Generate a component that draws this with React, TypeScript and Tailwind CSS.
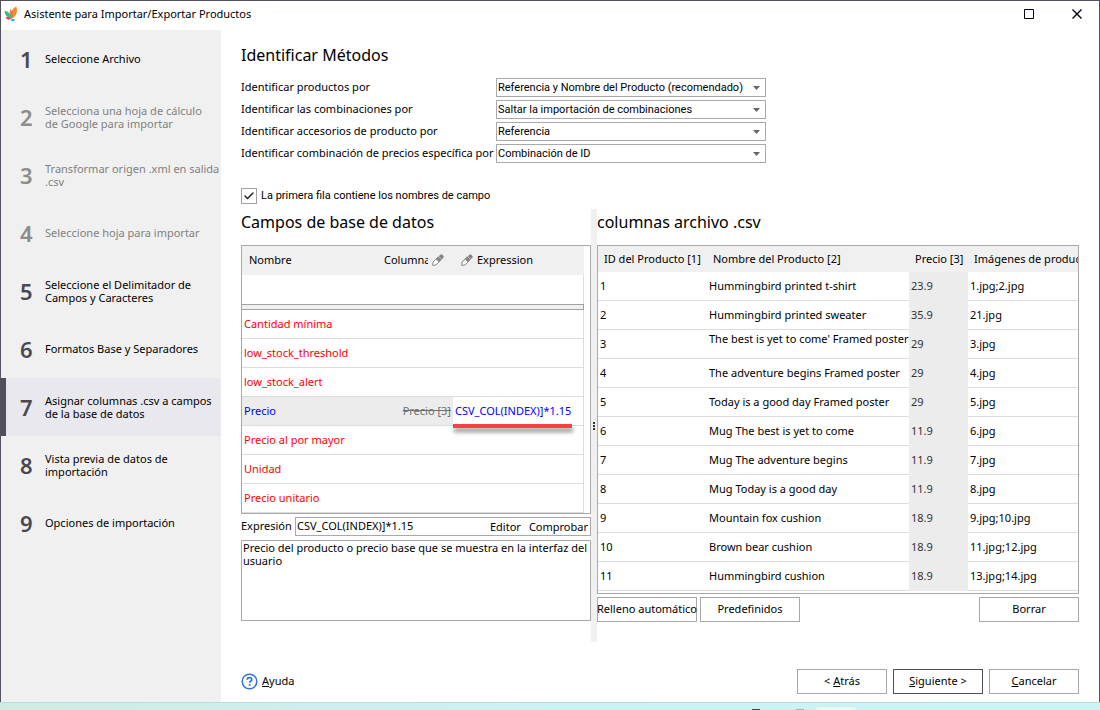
import { Check } from "lucide-react";
import clsx from "clsx";

const steps = [
  { label: "Seleccione Archivo" },
  { label: "Selecciona una hoja de cálculo de\u00a0Google para importar", disabled: true },
  { label: "Transformar origen .xml en salida .csv", disabled: true },
  { label: "Seleccione hoja para importar", disabled: true },
  { label: "Seleccione el Delimitador de Campos y Caracteres" },
  { label: "Formatos Base y Separadores" },
  { label: "Asignar columnas .csv a campos de la base de datos", active: true },
  { label: "Vista previa de datos de importación" },
  { label: "Opciones de importación" },
];

const methods = [
  { id: "products", label: "Identificar productos por", value: "Referencia y Nombre del Producto (recomendado)" },
  { id: "combinations", label: "Identificar las combinaciones por", value: "Saltar la importación de combinaciones" },
  { id: "accessories", label: "Identificar accesorios de producto por", value: "Referencia" },
  { id: "prices", label: "Identificar combinación de precios específica por", value: "Combinación de ID" },
];

const fields = [
  { name: "Cantidad mínima" },
  { name: "low_stock_threshold" },
  { name: "low_stock_alert" },
  { name: "Precio", column: "Precio [3]", expression: "CSV_COL(INDEX)]*1.15" },
  { name: "Precio al por mayor" },
  { name: "Unidad" },
  { name: "Precio unitario" },
];

const products = [
  ["1", "Hummingbird printed t-shirt", "23.9", "1.jpg;2.jpg"],
  ["2", "Hummingbird printed sweater", "35.9", "21.jpg"],
  ["3", "The best is yet to come' Framed poster", "29", "3.jpg"],
  ["4", "The adventure begins Framed poster", "29", "4.jpg"],
  ["5", "Today is a good day Framed poster", "29", "5.jpg"],
  ["6", "Mug The best is yet to come", "11.9", "6.jpg"],
  ["7", "Mug The adventure begins", "11.9", "7.jpg"],
  ["8", "Mug Today is a good day", "11.9", "8.jpg"],
  ["9", "Mountain fox cushion", "18.9", "9.jpg;10.jpg"],
  ["10", "Brown bear cushion", "18.9", "11.jpg;12.jpg"],
  ["11", "Hummingbird cushion", "18.9", "13.jpg;14.jpg"],
];

// selects and the checkbox use the narrower system face
const systemFont = "font-['Roboto','Liberation_Sans',sans-serif]";

function Logo() {
  return (
    <svg className="h-4 w-4 shrink-0" viewBox="0 0 16 16" aria-hidden="true">
      <path d="M12.300.5c1.700 5 .2 9.500-4.300 12C5.300 8 7.300 3 12.300.5Z" fill="#f28a3c" />
      <path d="M6.500 3c2.300 3 3 6.500 1.500 9.500C5.500 10.500 4.700 6.500 6.500 3Z" fill="#e8702f" opacity=".85" />
      <path d="M.5 4.800c4 .7 6.300 3.200 6.800 7.200C3.500 12.500 1 9.500.5 4.800Z" fill="#2fc08f" />
      <path d="M1.500 11.500c2-1 4.500-.5 6 1-2 1.800-4.700 1.500-6-1Z" fill="#ef4056" />
      <path d="M6.500 14c1.500-1.700 3.300-1.700 4.500-.5-.5 2.300-3 2.700-4.500.5Z" fill="#35b6ea" />
    </svg>
  );
}

function Pencil() {
  return (
    <svg className="h-3 w-3 shrink-0" viewBox="0 0 12 12" aria-hidden="true">
      <path d="M8.300.8Q9.300-.2 10.300.8l1 1q.9 1 0 1.900L9.800 5.200 6.800 2.200Z" fill="#858585" />
      <path d="M6.300 2.800 9.200 5.700 4 10.900.7 11.400 1.100 8Z" fill="#fff" stroke="#858585" />
      <path d="m6.300 2.800 2.900 2.900-2.400 2.400-2.900-2.900Z" fill="#858585" />
    </svg>
  );
}

function TitleBar() {
  return (
    <header className="flex h-[29px] items-center gap-1 pb-[3px] pl-[3px]">
      <Logo />
      <h1 className="flex-1">Asistente para Importar/Exportar Productos</h1>
      <button aria-label="Maximizar" className="flex h-7 w-11 items-center justify-center">
        <svg width="10" height="10" viewBox="0 0 10 10">
          <path d="M.5.5h9v9h-9Z" fill="none" stroke="#000" />
        </svg>
      </button>
      <button aria-label="Cerrar" className="flex h-7 w-11 items-center justify-center">
        <svg width="10" height="10" viewBox="0 0 10 10">
          <path d="m.5.5 9 9m0-9-9 9" fill="none" stroke="#000" strokeWidth="1.400" />
        </svg>
      </button>
    </header>
  );
}

function Sidebar() {
  return (
    <nav className="w-[220px] shrink-0 bg-[#f0f0f0]">
      <ol>
        {steps.map((step, index) => (
          <li
            key={step.label}
            className={clsx(
              "flex h-[58px] items-center border-l-[5px] pb-px",
              step.active ? "border-[#524e5b] bg-[#e9e8ee]" : "border-transparent",
              step.disabled ? "text-[#808080]" : "text-black"
            )}
          >
            <span
              className={clsx(
                "w-[39px] pl-[14px] text-[22px] leading-7 font-semibold",
                step.disabled ? "text-[#8c8c8c]" : "text-[#4b4853]"
              )}
            >
              {index + 1}
            </span>
            <span className="flex-1 leading-[13px]">{step.label}</span>
          </li>
        ))}
      </ol>
    </nav>
  );
}

function Methods() {
  return (
    <section>
      <h2 className="mb-2 text-[16px] leading-6">Identificar Métodos</h2>
      <div className="flex flex-col gap-[3px] pt-[3px]">
        {methods.map((method) => (
          <div key={method.id} className="flex h-[19px] items-center">
            <label htmlFor={method.id} className="w-[255px] shrink-0 pb-px whitespace-nowrap">
              {method.label}
            </label>
            <div className="relative w-[270px]">
              <select
                id={method.id}
                className={clsx(
                  systemFont,
                  "block h-[19px] w-full appearance-none border border-[#a9a9a9] bg-white pl-px leading-4 outline-none"
                )}
              >
                <option>{method.value}</option>
              </select>
              <svg className="pointer-events-none absolute top-2 right-[6px]" width="7" height="4" viewBox="0 0 7 4">
                <path d="M0 0h7L3.500 4Z" fill="#666" />
              </svg>
            </div>
          </div>
        ))}
      </div>
    </section>
  );
}

function FieldsTable() {
  return (
    <div className="border border-[#a9a9a9] pr-[6px]">
      <table className="w-full table-fixed border-separate border-spacing-0 text-left">
        <colgroup>
          <col />
          <col className="w-[69px]" />
          <col className="w-[131px]" />
        </colgroup>
        <thead className="bg-[#f0f0f0]">
          <tr className="h-[29px]">
            <th className="pb-px pl-[7px] font-normal">Nombre</th>
            <th className="pb-px font-normal">
              <span className="flex items-center gap-1">
                <span className="w-11 overflow-hidden">Columna</span>
                <Pencil />
              </span>
            </th>
            <th className="pb-px font-normal">
              <span className="flex items-center gap-1 pl-2">
                <Pencil />
                Expression
              </span>
            </th>
          </tr>
        </thead>
        <tbody>
          <tr className="h-[29px]">
            <td colSpan={3} className="border-r border-[#dcdcdc]" />
          </tr>
          <tr className="h-[6px]">
            <td colSpan={3} className="p-0">
              <div className="h-[6px] border-y border-r border-[#a0a0a0] bg-[#f0f0f0]" />
            </td>
          </tr>
          {fields.map((field) => (
            <tr
              key={field.name}
              className={clsx("h-[29px]", field.column ? "bg-[#ececec] text-[#0000ff]" : "text-[#ff0000]")}
            >
              <td className="border-b border-[#dcdcdc] pl-[2px] whitespace-nowrap">{field.name}</td>
              <td className="border-b border-[#dcdcdc] pr-[2px] text-right whitespace-nowrap text-[#707070]">
                {field.column && <s>{field.column}</s>}
              </td>
              <td className="relative border-r border-b border-[#dcdcdc] bg-white pl-[2px] whitespace-nowrap">
                {field.expression}
                {field.expression && (
                  <span className="absolute top-[27px] left-0 z-10 h-1 w-[119px] bg-[#f94144] shadow-[1px_4px_4px_rgba(0,0,0,0.45)]" />
                )}
              </td>
            </tr>
          ))}
        </tbody>
      </table>
    </div>
  );
}

function DatabaseFields() {
  return (
    <section className="min-w-0 flex-[350]">
      <h2 className="mb-[10px] text-[16px] leading-[26px]">Campos de base de datos</h2>
      <FieldsTable />
      <div className="mt-[3px] flex items-center">
        <label htmlFor="expression" className="w-[54px] shrink-0 pb-px">
          Expresión
        </label>
        <div className="flex h-[19px] min-w-0 flex-1 items-center border border-[#a9a9a9] pr-[2px] pl-px">
          <input
            id="expression"
            className="w-0 flex-1 pb-px outline-none"
            defaultValue="CSV_COL(INDEX)]*1.15"
          />
          <button className="mr-2">Editor</button>
          <button>Comprobar</button>
        </div>
      </div>
      <textarea
        aria-label="Descripción"
        readOnly
        className="mt-1 block h-[81px] w-full resize-none border border-[#a9a9a9] pl-px leading-[13px] outline-none"
        defaultValue="Precio del producto o precio base que se muestra en la interfaz del usuario"
      />
    </section>
  );
}

function CsvColumns() {
  return (
    <section className="min-w-0 flex-[482]">
      <h2 className="mb-[10px] text-[16px] leading-[26px]">columnas archivo .csv</h2>
      <div className="overflow-hidden border border-[#a9a9a9] pb-[2px]">
        <table className="w-full table-fixed border-separate border-spacing-0 text-left whitespace-nowrap">
          <colgroup>
            <col className="w-[109px]" />
            <col className="w-[202px]" />
            <col className="w-[59px]" />
            <col />
          </colgroup>
          <thead className="bg-[#f0f0f0]">
            <tr className="h-[26px]">
              <th className="pl-[6px] font-normal">ID del Producto [1]</th>
              <th className="pl-[6px] font-normal">Nombre del Producto [2]</th>
              <th className="pl-[6px] font-normal">Precio [3]</th>
              <th className="overflow-hidden pl-[6px] font-normal">Imágenes de producto [4]</th>
            </tr>
          </thead>
          <tbody>
            {products.map(([id, name, price, images]) => (
              <tr key={id} className="h-[29px]">
                <td className="border-b border-[#dcdcdc] pl-[2px]">{id}</td>
                <td className={clsx("border-b border-[#dcdcdc] pl-[2px]", id === "3" && "pt-px align-top")}>
                  {name}
                </td>
                <td className="border-b border-[#ececec] bg-[#ececec] pl-[2px] text-[#333]">{price}</td>
                <td className="border-b border-[#dcdcdc] pl-[2px]">{images}</td>
              </tr>
            ))}
          </tbody>
        </table>
      </div>
      <div className="mt-[3px] flex gap-[3px]">
        <button className="flex h-[25px] w-[100px] items-center justify-center border border-[#a9a9a9] pb-px whitespace-nowrap">
          Relleno automático
        </button>
        <button className="h-[25px] w-[100px] border border-[#a9a9a9] pb-px">Predefinidos</button>
        <button className="ml-auto h-[25px] w-[100px] border border-[#a9a9a9] pb-px">Borrar</button>
      </div>
    </section>
  );
}

function Footer() {
  return (
    <footer className="mt-auto flex items-center gap-[6px] pt-4 pb-2">
      <a href="#" className="mr-auto flex items-center gap-1">
        <svg width="17" height="17" viewBox="0 0 17 17" fill="none" stroke="#2f73dc" aria-hidden="true">
          <circle cx="8.500" cy="8.500" r="7.300" strokeWidth="1.500" />
          <path d="M6.200 6.700c.1-2.900 4.700-2.600 4.600 0 0 1.500-2.200 1.500-2.200 3.100M8.600 11v1.700" strokeWidth="1.700" />
        </svg>
        <span className="pb-px">
          <u>A</u>yuda
        </span>
      </a>
      <button className="h-[25px] w-[90px] border border-[#a9a9a9] pb-px">
        &lt; <u>A</u>trás
      </button>
      <button className="h-[25px] w-[90px] border border-[#524e5b] pb-px">
        <u>S</u>iguiente &gt;
      </button>
      <button className="h-[25px] w-[90px] border border-[#a9a9a9] pb-px">
        <u>C</u>ancelar
      </button>
    </footer>
  );
}

export default function App() {
  return (
    <div className="flex min-h-screen flex-col bg-white font-['Noto_Sans','Open_Sans',sans-serif] text-[11px] leading-4 text-black">
      <div className="flex flex-1 flex-col border-x border-t border-[#565160]">
        <TitleBar />
        <div className="flex flex-1">
          <Sidebar />
          <main className="flex min-w-0 flex-1 flex-col px-5 pt-[13px]">
            <Methods />
            <label className={clsx(systemFont, "mt-[25px] flex items-center gap-1")}>
              <span className="relative h-4 w-4">
                <input type="checkbox" defaultChecked className="block h-4 w-4 appearance-none border border-[#a0a0a0]" />
                <Check className="pointer-events-none absolute top-[2px] left-[2px] h-3 w-3 text-[#222]" strokeWidth={3} />
              </span>
              La primera fila contiene los nombres de campo
            </label>
            <div className="mt-[5px] flex">
              <DatabaseFields />
              <div className="flex h-[433px] w-[6px] shrink-0 items-center justify-center bg-[#f0f0f0]">
                <svg width="2" height="8" viewBox="0 0 2 8">
                  <path d="M0 0h2v2H0ZM0 3h2v2H0ZM0 6h2v2H0Z" fill="#333" />
                </svg>
              </div>
              <CsvColumns />
            </div>
            <Footer />
          </main>
        </div>
      </div>
      <div className="flex h-2 items-end justify-center border-t border-[#b9dcdc] bg-linear-to-r from-[#d0ebe5] via-[#cbf2f3] to-[#cbf4f4]">
        <span className="ml-[508px] h-px w-2 bg-[#3c4a50]" />
        <span className="ml-9 h-px w-2 bg-[#9fb4b8]" />
        <span className="ml-3 h-[3px] w-10 rounded-t bg-[#e8f8f9]" />
      </div>
    </div>
  );
}
